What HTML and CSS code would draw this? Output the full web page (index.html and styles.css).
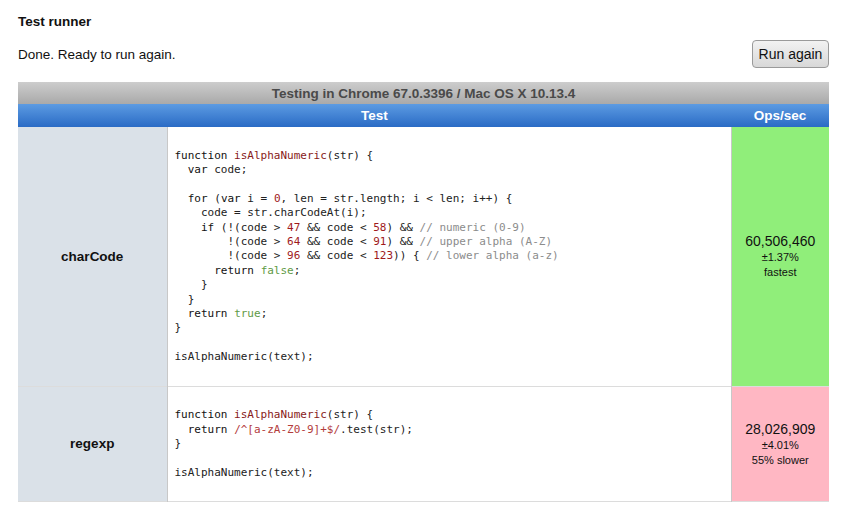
FILE: index.html
```html
<!DOCTYPE html>
<html>
<head>
<meta charset="utf-8">
<link rel="stylesheet" href="styles.css">
</head>
<body>
<div class="page">
  <h1 class="title">Test runner</h1>
  <div class="status-row">
    <p class="status">Done. Ready to run again.</p>
    <button class="run-btn">Run again</button>
  </div>
  <table class="results">
    <colgroup>
      <col class="c-name">
      <col class="c-code">
      <col class="c-ops">
    </colgroup>
    <thead>
      <tr><th colspan="3" class="ua">Testing in Chrome 67.0.3396 / Mac OS X 10.13.4</th></tr>
      <tr class="cols"><th colspan="2">Test</th><th>Ops/sec</th></tr>
    </thead>
    <tbody>
      <tr>
        <th class="name">charCode</th>
        <td class="code"><pre><span class="k">function</span> <span class="fn">isAlphaNumeric</span>(str) {
  <span class="k">var</span> code;

  <span class="k">for</span> (<span class="k">var</span> i = <span class="n">0</span>, len = str.length; i &lt; len; i++) {
    code = str.charCodeAt(i);
    <span class="k">if</span> (!(code &gt; <span class="n">47</span> &amp;&amp; code &lt; <span class="n">58</span>) &amp;&amp; <span class="c">// numeric (0-9)</span>
        !(code &gt; <span class="n">64</span> &amp;&amp; code &lt; <span class="n">91</span>) &amp;&amp; <span class="c">// upper alpha (A-Z)</span>
        !(code &gt; <span class="n">96</span> &amp;&amp; code &lt; <span class="n">123</span>)) { <span class="c">// lower alpha (a-z)</span>
      <span class="k">return</span> <span class="a">false</span>;
    }
  }
  <span class="k">return</span> <span class="a">true</span>;
}

isAlphaNumeric(text);</pre></td>
        <td class="ops fastest"><div class="num">60,506,460</div><small>±1.37%</small><small>fastest</small></td>
      </tr>
      <tr>
        <th class="name">regexp</th>
        <td class="code"><pre><span class="k">function</span> <span class="fn">isAlphaNumeric</span>(str) {
  <span class="k">return</span> <span class="re">/^[a-zA-Z0-9]+$/</span>.test(str);
}

isAlphaNumeric(text);</pre></td>
        <td class="ops slower"><div class="num">28,026,909</div><small>±4.01%</small><small>55% slower</small></td>
      </tr>
    </tbody>
  </table>
</div>
</body>
</html>
```

FILE: styles.css
```css
html, body {
  margin: 0;
  padding: 0;
  background: #fff;
}
body {
  font-family: "Liberation Sans", Arial, Helvetica, sans-serif;
  color: #111;
}
.page {
  padding: 14px 16px 0 18px;
}
.title {
  font-size: 13.5px;
  font-weight: bold;
  margin: 0;
  line-height: 16px;
}
.status-row {
  display: flex;
  justify-content: space-between;
  align-items: center;
  margin-top: 10px;
  height: 28px;
}
.status {
  margin: 0;
  padding-top: 2px;
  font-size: 13.5px;
  line-height: 16px;
}
.run-btn {
  width: 77px;
  height: 28px;
  font-family: "Liberation Sans", Arial, sans-serif;
  font-size: 14px;
  color: #111;
  border: 1px solid #9a9a9a;
  border-radius: 4px;
  background: linear-gradient(#f2f2f2, #d8d8d8);
  padding: 0;
}
.results {
  width: 811px;
  margin-top: 14px;
  border-collapse: collapse;
  table-layout: fixed;
}
.c-name { width: 149px; }
.c-code { width: 564px; }
.c-ops { width: 98px; }
.ua {
  height: 22px;
  padding: 0;
  font-size: 13.5px;
  font-weight: bold;
  color: #4a4a4a;
  background: linear-gradient(#cdcdcd, #a9a9a9);
  text-align: center;
}
.cols th {
  height: 23px;
  padding: 0;
  font-size: 13.5px;
  font-weight: bold;
  color: #fff;
  background: linear-gradient(#5c9be2, #2a6bc5);
  text-align: center;
}
tbody tr {
  border-bottom: 1px solid #dcdcdc;
}
.name {
  background: #dae1e8;
  border-right: 1px solid #c8c8c8;
  font-size: 13.5px;
  font-weight: bold;
  color: #111;
  text-align: center;
  padding: 0;
}
.code {
  padding: 21.5px 7px 21px;
  vertical-align: middle;
}
.code pre {
  margin: 0;
  font-family: "DejaVu Sans Mono", monospace;
  font-size: 11px;
  line-height: 14.4px;
  color: #222;
}
.k { color: #111; }
.fn { color: #881a1a; }
.n { color: #a0191b; }
.c { color: #8c8c8c; }
.a { color: #5f9a45; }
.re { color: #b33c3c; }
.ops {
  text-align: center;
  padding: 0;
  border-left: 1px solid #c8c8c8;
  color: #111;
}
.ops .num {
  font-size: 14px;
  line-height: 18px;
}
.ops small {
  display: block;
  font-size: 11px;
  line-height: 15px;
}
.fastest { background: #90ee7a; }
.slower { background: #ffb7c3; }
```
